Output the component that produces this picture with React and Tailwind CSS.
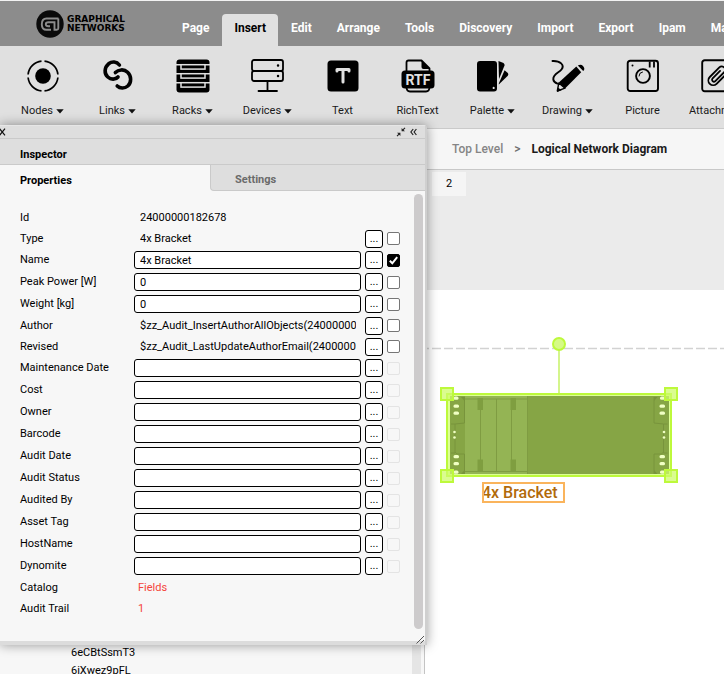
import React from "react";

const TABS = [
  "Page",
  "Insert",
  "Edit",
  "Arrange",
  "Tools",
  "Discovery",
  "Import",
  "Export",
  "Ipam",
  "Maps",
];

const FIELDS = [
  { label: "Id", value: "24000000182678", kind: "text" },
  { label: "Type", value: "4x Bracket", kind: "text", actions: true },
  { label: "Name", value: "4x Bracket", kind: "input", checked: true },
  { label: "Peak Power [W]", value: "0", kind: "input" },
  { label: "Weight [kg]", value: "0", kind: "input" },
  {
    label: "Author",
    value: "$zz_Audit_InsertAuthorAllObjects(24000000182678)",
    kind: "text",
    actions: true,
  },
  {
    label: "Revised",
    value: "$zz_Audit_LastUpdateAuthorEmail(24000000182678)",
    kind: "text",
    actions: true,
  },
  { label: "Maintenance Date", value: "", kind: "input", disabled: true },
  { label: "Cost", value: "", kind: "input", disabled: true },
  { label: "Owner", value: "", kind: "input", disabled: true },
  { label: "Barcode", value: "", kind: "input", disabled: true },
  { label: "Audit Date", value: "", kind: "input", disabled: true },
  { label: "Audit Status", value: "", kind: "input", disabled: true },
  { label: "Audited By", value: "", kind: "input", disabled: true },
  { label: "Asset Tag", value: "", kind: "input", disabled: true },
  { label: "HostName", value: "", kind: "input", disabled: true },
  { label: "Dynomite", value: "", kind: "input", disabled: true },
  { label: "Catalog", value: "Fields", kind: "link" },
  { label: "Audit Trail", value: "1", kind: "link" },
];

const Icon = ({ children }) => (
  <svg
    width="34"
    height="34"
    viewBox="0 0 34 34"
    fill="none"
    stroke="#000"
    strokeWidth="2"
    strokeLinecap="round"
    strokeLinejoin="round"
    className="block shrink-0"
  >
    {children}
  </svg>
);

const NodesIcon = () => (
  <Icon>
    <circle cx="17" cy="17" r="7.8" fill="#000" stroke="none" />
    <path
      d="M18.5 2.1 A15 15 0 0 1 31.9 15.5 M31.9 18.5 A15 15 0 0 1 18.5 31.9 M15.5 31.9 A15 15 0 0 1 2.1 18.5 M2.1 15.5 A15 15 0 0 1 15.5 2.1"
      strokeWidth="1.7"
      strokeLinecap="butt"
    />
  </Icon>
);

const LinksIcon = () => (
  <Icon>
    <path
      d="M18.4 6 C15.6 2.4 11 2.2 7.6 4.8 C3.2 8.5 3 14.6 6.8 18 C9.8 20.8 14.6 20.9 17 18"
      strokeWidth="3.6"
    />
    <path
      d="M14.4 13.6 C17.4 10.4 23 9.8 26.6 13.2 C30.6 17 30.6 23.6 26.8 27 C23.8 29.6 19 29.8 16.2 27"
      strokeWidth="3.6"
    />
  </Icon>
);

const RacksIcon = () => (
  <Icon>
    <rect x="0.5" y="0.5" width="33" height="33" rx="3" fill="#000" stroke="none" />
    <g stroke="#e0e0e0" strokeWidth="1.5" strokeLinejoin="miter" strokeLinecap="butt">
      <rect x="5" y="5.7" width="24" height="4.4" />
      <rect x="5" y="14.7" width="24" height="4.4" />
      <rect x="5" y="23.7" width="24" height="4.4" />
      <path d="M0 5.7 H5 M29 5.7 H34 M0 14.7 H5 M29 14.7 H34 M0 23.7 H5 M29 23.7 H34" />
    </g>
  </Icon>
);

const DevicesIcon = () => (
  <Icon>
    <rect x="1" y="1" width="31" height="11" rx="2" strokeWidth="1.8" />
    <rect x="1" y="12" width="31" height="10" rx="2" strokeWidth="1.8" />
    <path d="M16.5 22 V32 M7.5 32 H26" strokeWidth="1.8" />
    <path d="M27 6.5 h0.1 M27 17 h0.1" strokeWidth="2.4" />
  </Icon>
);

const TextIcon = () => (
  <Icon>
    <rect x="1.5" y="1.5" width="31" height="31" rx="3.5" fill="#000" stroke="none" />
    <path d="M11 12 V10.5 H23 V12 M17 10.5 V23" stroke="#e0e0e0" strokeWidth="3" />
  </Icon>
);

const RichTextIcon = () => (
  <Icon>
    <path
      d="M5.5 12 V3.5 Q5.5 1.5 7.5 1.5 H20.5 L28.5 9.5 V12 M5.5 28 Q5.5 32.5 9 32.5 H25 Q28.5 32.5 28.5 28"
      strokeWidth="1.8"
    />
    <path d="M20.5 1.5 L28.5 10 H22.5 Q20.5 10 20.5 8 Z" fill="#000" stroke="none" />
    <rect x="0.5" y="11.5" width="33" height="18" rx="3.5" fill="#000" stroke="none" />
    <text
      x="17"
      y="25.5"
      textAnchor="middle"
      fontSize="14"
      fontWeight="700"
      fontFamily="Roboto, sans-serif"
      fill="#e0e0e0"
      stroke="none"
    >
      RTF
    </text>
  </Icon>
);

const PaletteIcon = () => (
  <Icon>
    <path
      fillRule="evenodd"
      d="M4 2 H18 Q21 2 21 5 V29.5 Q21 32.5 18 32.5 H4 Q1 32.5 1 29.5 V5 Q1 2 4 2 Z M17.6 27.8 a1.1 1.1 0 1 0 0.1 0 Z"
      fill="#000"
      stroke="none"
    />
    <path d="M22.5 2 L27.5 4 Q28.9 5 28.5 6.5 L23 20 Z" fill="#000" stroke="none" />
    <path d="M28.6 11.2 L31.8 14 Q32.9 15.4 31.8 16.7 L22.8 25.6 V24.6 Z" fill="#000" stroke="none" />
  </Icon>
);

const DrawingIcon = () => (
  <Icon>
    <path
      d="M1.5 2 C9 1.6 14 6 10.5 10.5 C7.8 14 2 15 2.3 20.3 C2.6 23 4.8 24 6.5 24.6"
      strokeWidth="1.9"
    />
    <path d="M25.3 7.6 L30.2 13.3 L14 29.4 L7.8 23.5 Z" fill="#000" stroke="none" />
    <path d="M7.8 24 L6.3 32 L14 29.2 Z" strokeWidth="1.4" />
    <path d="M6 33 L7 28.5 L10.5 31.2 Z" fill="#000" stroke="none" />
    <path d="M26.8 6.5 Q30 4.6 32 7 Q34.6 9.8 32.2 12 Z" fill="#000" stroke="none" />
  </Icon>
);

const PictureIcon = () => (
  <Icon>
    <rect x="1.7" y="1.7" width="30.3" height="30.3" rx="2.5" strokeWidth="1.9" />
    <circle cx="17" cy="17" r="6.9" strokeWidth="1.9" />
    <path d="M13 17 A4 4 0 0 1 16.5 13" strokeWidth="1" />
    <path d="M23.7 2.5 V8.5 M28 2.5 V8.5" strokeWidth="1.8" strokeLinecap="butt" />
    <circle cx="6.5" cy="6.5" r="1" fill="#000" stroke="none" />
  </Icon>
);

const AttachIcon = () => (
  <Icon>
    <rect x="1.2" y="1.2" width="31" height="31" rx="2.5" strokeWidth="1.9" />
    <g transform="rotate(45 17 17)" strokeWidth="1.8">
      <path d="M21.5 8 V23.5 a4.8 4.8 0 0 1 -9.6 0 V10 a3.4 3.4 0 0 1 6.8 0 V22.5 a1.9 1.9 0 0 1 -3.8 0 V12" />
    </g>
  </Icon>
);

const TOOLS = [
  { label: "Nodes", icon: NodesIcon, menu: true },
  { label: "Links", icon: LinksIcon, menu: true },
  { label: "Racks", icon: RacksIcon, menu: true },
  { label: "Devices", icon: DevicesIcon, menu: true },
  { label: "Text", icon: TextIcon },
  { label: "RichText", icon: RichTextIcon },
  { label: "Palette", icon: PaletteIcon, menu: true },
  { label: "Drawing", icon: DrawingIcon, menu: true },
  { label: "Picture", icon: PictureIcon },
  { label: "Attachment", icon: AttachIcon },
];

const Logo = () => (
  <div className="flex w-[170px] shrink-0 items-center gap-[3px] self-stretch pl-9">
    <svg width="28" height="28" viewBox="0 0 28 28" fill="none" className="block shrink-0">
      <circle cx="14" cy="14" r="13.7" fill="#0a0a0a" />
      <path
        d="M22.5 8.5 H10.5 Q5.8 8.5 5.8 14.2 Q5.8 19.8 10.5 19.8 H15 M22.3 8.5 V18.3 Q22.3 19.8 20.8 19.8 H18.5 V12.3 H12.5 Q9.8 12.3 9.8 14.2 Q9.8 16.2 12.5 16.2 H14"
        stroke="#8c8c8c"
        strokeWidth="1.9"
      />
    </svg>
    <span className="font-['DejaVu_Sans',sans-serif] text-[9px] leading-[9px] font-bold text-black">
      GRAPHICAL
      <br />
      NETWORKS
    </span>
  </div>
);

const NavBar = () => (
  <header className="flex h-[46px] shrink-0 items-end overflow-hidden border-t border-[#f2f2f2] bg-[#8c8c8c]">
    <Logo />
    <nav className="flex shrink-0 gap-px">
      {TABS.map((tab) => (
        <button
          key={tab}
          type="button"
          className={
            tab === "Insert"
              ? "h-8 shrink-0 rounded-t-[4px] bg-[#e0e0e0] px-3 pb-1 text-xs font-bold text-black"
              : "h-8 shrink-0 px-3 pb-1 text-xs font-bold text-white"
          }
        >
          {tab}
        </button>
      ))}
    </nav>
  </header>
);

const Caret = () => (
  <svg width="8" height="5" viewBox="0 0 8 5" className="block">
    <path d="M0.3 0.3 H7.7 L4 4.5 Z" fill="#111" />
  </svg>
);

const Toolbar = () => (
  <div className="flex h-[83px] shrink-0 overflow-hidden border-b border-[#cacaca] bg-[#e0e0e0] pl-[5px]">
    {TOOLS.map(({ label, icon: ToolIcon, menu }) => (
      <button
        key={label}
        type="button"
        className="flex w-[75px] shrink-0 flex-col items-center gap-2.5 pt-[13px] text-[#1a1a1a]"
      >
        <ToolIcon />
        <span className="flex items-center gap-[3px] text-[11px] leading-4">
          {label}
          {menu && <Caret />}
        </span>
      </button>
    ))}
  </div>
);

const FieldRow = ({ field }) => {
  const { label, value, kind, checked, disabled } = field;
  const id = label.toLowerCase().replace(/\W+/g, "-");
  const hasActions = kind === "input" || field.actions;

  return (
    <div
      className={
        kind === "input"
          ? "grid h-[22px] grid-cols-[114px_1fr_34px] items-center gap-x-1"
          : "grid h-[21px] grid-cols-[114px_1fr_34px] items-center gap-x-1"
      }
    >
      <label htmlFor={kind === "link" ? undefined : id}>{label}</label>

      {kind === "link" ? (
        <a href="#" className="text-[#f4443b]">
          {value}
        </a>
      ) : (
        <input
          id={id}
          type="text"
          defaultValue={value}
          readOnly={kind === "text"}
          className={
            kind === "input"
              ? "-ml-1 h-[18px] min-w-0 rounded-[3px] border border-black bg-white px-[5px] outline-none"
              : "mr-[5px] ml-[2px] h-[18px] min-w-0 bg-transparent outline-none"
          }
        />
      )}

      {hasActions && (
        <div className="flex items-center gap-1">
          <button
            type="button"
            aria-label={`More options for ${label}`}
            className="h-[18px] w-[18px] shrink-0 rounded-[3px] border border-black bg-white leading-4"
          >
            ...
          </button>
          <span className="grid">
            <input
              type="checkbox"
              aria-label={`Lock ${label}`}
              defaultChecked={checked}
              disabled={disabled}
              className="peer h-[13px] w-[13px] appearance-none rounded-[2px] border border-[#767676] bg-white [grid-area:1/1] checked:border-black checked:bg-black disabled:border-[#e4e4e4] disabled:bg-[#f7f7f7]"
            />
            <svg
              width="13"
              height="13"
              viewBox="0 0 13 13"
              fill="none"
              className="pointer-events-none invisible [grid-area:1/1] peer-checked:visible"
            >
              <path d="M2.8 6.8 L5.3 9.3 L10.2 3.2" stroke="#fff" strokeWidth="2" />
            </svg>
          </span>
        </div>
      )}
    </div>
  );
};

const Inspector = () => (
  <section className="absolute top-[125px] left-0 w-[427px] max-w-full rounded-tr-[3px] border-t border-r-2 border-[#cfcfcf] border-t-[#e6e6e6] bg-[#f7f7f7] shadow-[0_0_12px_rgba(0,0,0,0.4)]">
    <div className="flex h-[13px] items-center justify-between overflow-hidden border-b border-[#cacaca] bg-[#dedede] pr-2">
      <button type="button" aria-label="Close" className="block">
        <svg width="6" height="8" viewBox="0 0 6 8" fill="none" className="block">
          <path d="M-0.5 0.7 L5 7.3 M5 0.7 L-0.5 7.3" stroke="#111" strokeWidth="1.2" />
        </svg>
      </button>
      <div className="flex items-center gap-1">
        <button type="button" aria-label="Shrink" className="block">
          <svg width="10" height="10" viewBox="0 0 10 10" className="block">
            <path
              d="M9.4 1.2 L7.6 3 L9 4.3 H5.6 V1 L6.8 2.2 L8.6 0.4 Z M0.6 8.8 L2.4 7 L1 5.7 H4.4 V9 L3.2 7.8 L1.4 9.6 Z"
              fill="#222"
            />
          </svg>
        </button>
        <button type="button" aria-label="Collapse" className="block">
          <svg width="7" height="8" viewBox="0 0 7 8" fill="none" className="block">
            <path d="M3.2 1 L0.9 4 L3.2 7 M6.4 1 L4.1 4 L6.4 7" stroke="#222" strokeWidth="1.2" />
          </svg>
        </button>
      </div>
    </div>

    <h2 className="flex h-[26px] items-end border-b border-[#cacaca] bg-[#dedede] pb-px pl-5 text-[11px] leading-4 font-bold">
      Inspector
    </h2>

    <div className="flex h-[26px] text-[11px] font-bold" role="tablist">
      <button
        type="button"
        role="tab"
        aria-selected="true"
        className="w-[210px] shrink-0 pt-1.5 pl-5 text-left"
      >
        Properties
      </button>
      <button
        type="button"
        role="tab"
        aria-selected="false"
        className="flex-1 rounded-bl-[4px] border-b border-l border-[#cacaca] bg-[#dedede] pt-1.5 pl-6 text-left text-[#6b6b6b]"
      >
        Settings
      </button>
    </div>

    <div className="flex gap-[15px] pt-[3px] pr-[2px] pb-3">
      <form className="min-w-0 flex-1 pt-[13px] pb-[10px] pl-5 text-[11px] leading-4 text-black">
        {FIELDS.map((field) => (
          <FieldRow key={field.label} field={field} />
        ))}
      </form>
      <div className="w-[9px] shrink-0 rounded-full bg-[#cdcbcc]" />
    </div>

    <div className="relative h-1 bg-[#dcdcdc]">
      <svg
        width="9"
        height="9"
        viewBox="0 0 9 9"
        fill="none"
        className="absolute right-0 bottom-px"
      >
        <path d="M0.5 8.5 L8 1 M4.5 8.5 L8 5" stroke="#555" />
      </svg>
    </div>
  </section>
);

const TreePanel = () => (
  <aside className="flex w-[425px] shrink-0 justify-between overflow-hidden border-r border-[#c4c4c4] bg-[#f7f7f7]">
    <ul className="pt-[515px] pl-[71px] text-[11px] leading-[18px] text-black">
      <li>6eCBtSsmT3</li>
      <li>6iXwez9pFL</li>
    </ul>
    <div className="mr-[3px] w-[9px] bg-[#e5e5e5]" />
  </aside>
);

// One mounting ear of the bracket, drawn for the left side
const BracketEar = () => (
  <g>
    <path d="M26 134 H30 V163 H26" stroke="#78943c" fill="none" />
    <path d="M30 134 L39.5 133 V107 M30 162 L32 164 H39.5 V184" stroke="#78943c" fill="none" />
    <path d="M26 107 h10 l3.5 4 v-4 z M26 184 h10 l3.5 -4 v4 z" fill="#78943c" />
    <g fill="#f0ffc4">
      <rect x="28.5" y="106.5" width="5" height="3.2" rx="1.5" />
      <rect x="28.5" y="114.5" width="5.5" height="3.2" rx="1.5" />
      <rect x="28.5" y="121.5" width="5.5" height="3.2" rx="1.5" />
      <circle cx="29.5" cy="142" r="1.3" />
      <circle cx="29.5" cy="147.5" r="1.3" />
      <rect x="28.5" y="165" width="5.5" height="3.2" rx="1.5" />
      <rect x="28.5" y="172" width="5.5" height="3.2" rx="1.5" />
      <rect x="28.5" y="180.5" width="5" height="3.2" rx="1.5" />
    </g>
  </g>
);

const Diagram = () => (
  <div className="relative min-h-0 flex-1 overflow-hidden bg-white">
    <svg width="100%" height="100%" className="absolute inset-0 block">
      <line
        x1="-5"
        y1="58.5"
        x2="100%"
        y2="58.5"
        stroke="#d2d2d2"
        strokeWidth="1.3"
        strokeDasharray="9 3"
      />
      <line x1="134" y1="60" x2="134" y2="103" stroke="#d4f58c" strokeWidth="2" />
      <rect x="22" y="104" width="224" height="82" fill="#ddff95" stroke="#bdf93b" strokeWidth="2" />
      <rect x="25" y="106" width="219" height="78" fill="#86a545" />
      <rect x="40" y="106" width="62" height="78" fill="#94b454" />
      <path
        d="M40 109 H102.5 M40 181.5 H102.5 M55.5 109 V181 M71.5 109 V181 M86.5 109 V181 M102.5 106 V184"
        stroke="#7f9c42"
        fill="none"
      />
      <g fill="#7f9e40">
        <rect x="52.5" y="108" width="5.5" height="12" />
        <rect x="85.5" y="108" width="5.5" height="12" />
        <rect x="52.5" y="169.5" width="5.5" height="12" />
        <rect x="85.5" y="169.5" width="5.5" height="12" />
      </g>
      <BracketEar />
      <g transform="translate(268.5 0) scale(-1 1)">
        <BracketEar />
      </g>
      <g fill="#cdfb6b" fillOpacity="0.75" stroke="#bdf93b" strokeWidth="2">
        <rect x="16" y="98" width="12" height="12" />
        <rect x="240" y="98" width="12" height="12" />
        <rect x="16" y="180" width="12" height="12" />
        <rect x="240" y="180" width="12" height="12" />
      </g>
      <circle cx="134" cy="54" r="6" fill="#d6fa86" stroke="#bdf93b" strokeWidth="2" />
    </svg>
    <span className="absolute top-[192px] left-[57px] w-[83px] py-0.5 text-base leading-[17px] font-medium whitespace-nowrap text-[#b16a0a] outline-2 -outline-offset-2 outline-[#fab45c]">
      4x Bracket
    </span>
  </div>
);

const App = () => (
  <div className="relative flex h-screen flex-col overflow-hidden bg-white font-['Roboto',sans-serif] text-black">
    <NavBar />
    <Toolbar />
    <div className="flex min-h-0 flex-1">
      <TreePanel />
      <main className="flex min-w-0 flex-1 flex-col">
        <div className="flex h-[41px] shrink-0 items-center gap-[11px] overflow-hidden border-b border-[#c8c8c8] bg-[#f6f6f6] pl-[27px] text-xs font-medium whitespace-nowrap">
          <a href="#" className="text-[#858585]">
            Top Level
          </a>
          <span className="text-[#6f6f6f]">&gt;</span>
          <span className="font-bold text-[#1a1a1a]">Logical Network Diagram</span>
        </div>
        <div className="h-[120px] shrink-0 bg-[#ebebeb] pl-[7px]">
          <button type="button" className="h-6 w-[34px] bg-[#f5f5f5] text-[11px]">
            2
          </button>
        </div>
        <Diagram />
      </main>
    </div>
    <Inspector />
  </div>
);

export default App;
